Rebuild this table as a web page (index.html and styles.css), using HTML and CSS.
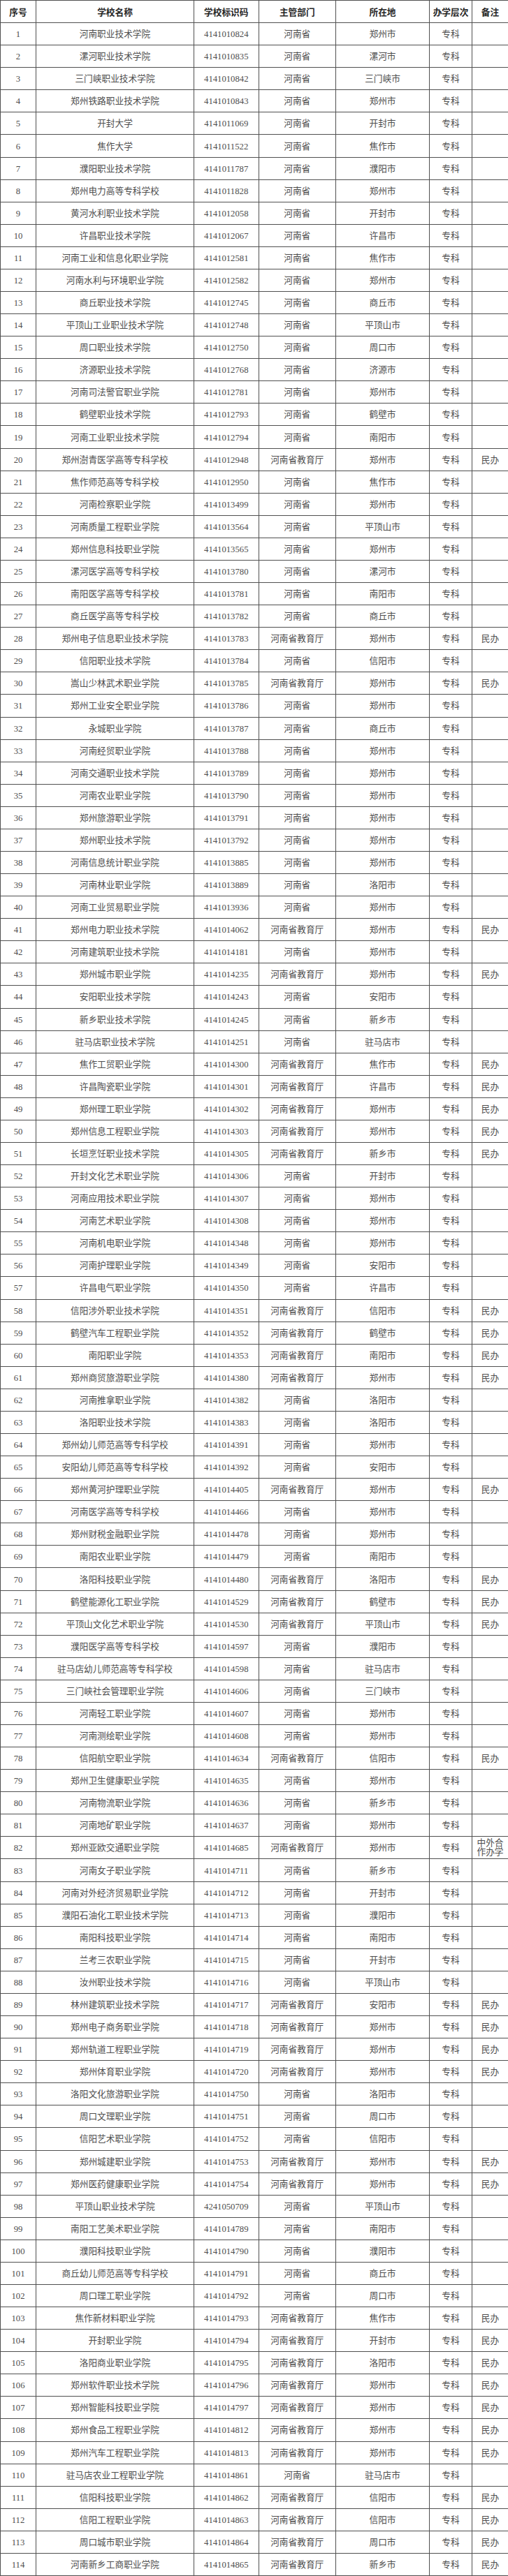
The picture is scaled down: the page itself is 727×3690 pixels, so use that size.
FILE: index.html
```html
<!DOCTYPE html>
<html lang="zh-CN">
<head>
<meta charset="utf-8">
<title>河南省高职院校名单</title>
<link rel="stylesheet" href="styles.css">
</head>
<body>
<table class="list">
<colgroup>
<col class="c-no"><col class="c-name"><col class="c-code"><col class="c-dept"><col class="c-city"><col class="c-level"><col class="c-note">
</colgroup>
<thead>
<tr><th>序号</th><th>学校名称</th><th>学校标识码</th><th>主管部门</th><th>所在地</th><th>办学层次</th><th>备注</th></tr>
</thead>
<tbody>
<tr><td>1</td><td>河南职业技术学院</td><td>4141010824</td><td>河南省</td><td>郑州市</td><td>专科</td><td></td></tr>
<tr><td>2</td><td>漯河职业技术学院</td><td>4141010835</td><td>河南省</td><td>漯河市</td><td>专科</td><td></td></tr>
<tr><td>3</td><td>三门峡职业技术学院</td><td>4141010842</td><td>河南省</td><td>三门峡市</td><td>专科</td><td></td></tr>
<tr><td>4</td><td>郑州铁路职业技术学院</td><td>4141010843</td><td>河南省</td><td>郑州市</td><td>专科</td><td></td></tr>
<tr><td>5</td><td>开封大学</td><td>4141011069</td><td>河南省</td><td>开封市</td><td>专科</td><td></td></tr>
<tr><td>6</td><td>焦作大学</td><td>4141011522</td><td>河南省</td><td>焦作市</td><td>专科</td><td></td></tr>
<tr><td>7</td><td>濮阳职业技术学院</td><td>4141011787</td><td>河南省</td><td>濮阳市</td><td>专科</td><td></td></tr>
<tr><td>8</td><td>郑州电力高等专科学校</td><td>4141011828</td><td>河南省</td><td>郑州市</td><td>专科</td><td></td></tr>
<tr><td>9</td><td>黄河水利职业技术学院</td><td>4141012058</td><td>河南省</td><td>开封市</td><td>专科</td><td></td></tr>
<tr><td>10</td><td>许昌职业技术学院</td><td>4141012067</td><td>河南省</td><td>许昌市</td><td>专科</td><td></td></tr>
<tr><td>11</td><td>河南工业和信息化职业学院</td><td>4141012581</td><td>河南省</td><td>焦作市</td><td>专科</td><td></td></tr>
<tr><td>12</td><td>河南水利与环境职业学院</td><td>4141012582</td><td>河南省</td><td>郑州市</td><td>专科</td><td></td></tr>
<tr><td>13</td><td>商丘职业技术学院</td><td>4141012745</td><td>河南省</td><td>商丘市</td><td>专科</td><td></td></tr>
<tr><td>14</td><td>平顶山工业职业技术学院</td><td>4141012748</td><td>河南省</td><td>平顶山市</td><td>专科</td><td></td></tr>
<tr><td>15</td><td>周口职业技术学院</td><td>4141012750</td><td>河南省</td><td>周口市</td><td>专科</td><td></td></tr>
<tr><td>16</td><td>济源职业技术学院</td><td>4141012768</td><td>河南省</td><td>济源市</td><td>专科</td><td></td></tr>
<tr><td>17</td><td>河南司法警官职业学院</td><td>4141012781</td><td>河南省</td><td>郑州市</td><td>专科</td><td></td></tr>
<tr><td>18</td><td>鹤壁职业技术学院</td><td>4141012793</td><td>河南省</td><td>鹤壁市</td><td>专科</td><td></td></tr>
<tr><td>19</td><td>河南工业职业技术学院</td><td>4141012794</td><td>河南省</td><td>南阳市</td><td>专科</td><td></td></tr>
<tr><td>20</td><td>郑州澍青医学高等专科学校</td><td>4141012948</td><td>河南省教育厅</td><td>郑州市</td><td>专科</td><td>民办</td></tr>
<tr><td>21</td><td>焦作师范高等专科学校</td><td>4141012950</td><td>河南省</td><td>焦作市</td><td>专科</td><td></td></tr>
<tr><td>22</td><td>河南检察职业学院</td><td>4141013499</td><td>河南省</td><td>郑州市</td><td>专科</td><td></td></tr>
<tr><td>23</td><td>河南质量工程职业学院</td><td>4141013564</td><td>河南省</td><td>平顶山市</td><td>专科</td><td></td></tr>
<tr><td>24</td><td>郑州信息科技职业学院</td><td>4141013565</td><td>河南省</td><td>郑州市</td><td>专科</td><td></td></tr>
<tr><td>25</td><td>漯河医学高等专科学校</td><td>4141013780</td><td>河南省</td><td>漯河市</td><td>专科</td><td></td></tr>
<tr><td>26</td><td>南阳医学高等专科学校</td><td>4141013781</td><td>河南省</td><td>南阳市</td><td>专科</td><td></td></tr>
<tr><td>27</td><td>商丘医学高等专科学校</td><td>4141013782</td><td>河南省</td><td>商丘市</td><td>专科</td><td></td></tr>
<tr><td>28</td><td>郑州电子信息职业技术学院</td><td>4141013783</td><td>河南省教育厅</td><td>郑州市</td><td>专科</td><td>民办</td></tr>
<tr><td>29</td><td>信阳职业技术学院</td><td>4141013784</td><td>河南省</td><td>信阳市</td><td>专科</td><td></td></tr>
<tr><td>30</td><td>嵩山少林武术职业学院</td><td>4141013785</td><td>河南省教育厅</td><td>郑州市</td><td>专科</td><td>民办</td></tr>
<tr><td>31</td><td>郑州工业安全职业学院</td><td>4141013786</td><td>河南省</td><td>郑州市</td><td>专科</td><td></td></tr>
<tr><td>32</td><td>永城职业学院</td><td>4141013787</td><td>河南省</td><td>商丘市</td><td>专科</td><td></td></tr>
<tr><td>33</td><td>河南经贸职业学院</td><td>4141013788</td><td>河南省</td><td>郑州市</td><td>专科</td><td></td></tr>
<tr><td>34</td><td>河南交通职业技术学院</td><td>4141013789</td><td>河南省</td><td>郑州市</td><td>专科</td><td></td></tr>
<tr><td>35</td><td>河南农业职业学院</td><td>4141013790</td><td>河南省</td><td>郑州市</td><td>专科</td><td></td></tr>
<tr><td>36</td><td>郑州旅游职业学院</td><td>4141013791</td><td>河南省</td><td>郑州市</td><td>专科</td><td></td></tr>
<tr><td>37</td><td>郑州职业技术学院</td><td>4141013792</td><td>河南省</td><td>郑州市</td><td>专科</td><td></td></tr>
<tr><td>38</td><td>河南信息统计职业学院</td><td>4141013885</td><td>河南省</td><td>郑州市</td><td>专科</td><td></td></tr>
<tr><td>39</td><td>河南林业职业学院</td><td>4141013889</td><td>河南省</td><td>洛阳市</td><td>专科</td><td></td></tr>
<tr><td>40</td><td>河南工业贸易职业学院</td><td>4141013936</td><td>河南省</td><td>郑州市</td><td>专科</td><td></td></tr>
<tr><td>41</td><td>郑州电力职业技术学院</td><td>4141014062</td><td>河南省教育厅</td><td>郑州市</td><td>专科</td><td>民办</td></tr>
<tr><td>42</td><td>河南建筑职业技术学院</td><td>4141014181</td><td>河南省</td><td>郑州市</td><td>专科</td><td></td></tr>
<tr><td>43</td><td>郑州城市职业学院</td><td>4141014235</td><td>河南省教育厅</td><td>郑州市</td><td>专科</td><td>民办</td></tr>
<tr><td>44</td><td>安阳职业技术学院</td><td>4141014243</td><td>河南省</td><td>安阳市</td><td>专科</td><td></td></tr>
<tr><td>45</td><td>新乡职业技术学院</td><td>4141014245</td><td>河南省</td><td>新乡市</td><td>专科</td><td></td></tr>
<tr><td>46</td><td>驻马店职业技术学院</td><td>4141014251</td><td>河南省</td><td>驻马店市</td><td>专科</td><td></td></tr>
<tr><td>47</td><td>焦作工贸职业学院</td><td>4141014300</td><td>河南省教育厅</td><td>焦作市</td><td>专科</td><td>民办</td></tr>
<tr><td>48</td><td>许昌陶瓷职业学院</td><td>4141014301</td><td>河南省教育厅</td><td>许昌市</td><td>专科</td><td>民办</td></tr>
<tr><td>49</td><td>郑州理工职业学院</td><td>4141014302</td><td>河南省教育厅</td><td>郑州市</td><td>专科</td><td>民办</td></tr>
<tr><td>50</td><td>郑州信息工程职业学院</td><td>4141014303</td><td>河南省教育厅</td><td>郑州市</td><td>专科</td><td>民办</td></tr>
<tr><td>51</td><td>长垣烹饪职业技术学院</td><td>4141014305</td><td>河南省教育厅</td><td>新乡市</td><td>专科</td><td>民办</td></tr>
<tr><td>52</td><td>开封文化艺术职业学院</td><td>4141014306</td><td>河南省</td><td>开封市</td><td>专科</td><td></td></tr>
<tr><td>53</td><td>河南应用技术职业学院</td><td>4141014307</td><td>河南省</td><td>郑州市</td><td>专科</td><td></td></tr>
<tr><td>54</td><td>河南艺术职业学院</td><td>4141014308</td><td>河南省</td><td>郑州市</td><td>专科</td><td></td></tr>
<tr><td>55</td><td>河南机电职业学院</td><td>4141014348</td><td>河南省</td><td>郑州市</td><td>专科</td><td></td></tr>
<tr><td>56</td><td>河南护理职业学院</td><td>4141014349</td><td>河南省</td><td>安阳市</td><td>专科</td><td></td></tr>
<tr><td>57</td><td>许昌电气职业学院</td><td>4141014350</td><td>河南省</td><td>许昌市</td><td>专科</td><td></td></tr>
<tr><td>58</td><td>信阳涉外职业技术学院</td><td>4141014351</td><td>河南省教育厅</td><td>信阳市</td><td>专科</td><td>民办</td></tr>
<tr><td>59</td><td>鹤壁汽车工程职业学院</td><td>4141014352</td><td>河南省教育厅</td><td>鹤壁市</td><td>专科</td><td>民办</td></tr>
<tr><td>60</td><td>南阳职业学院</td><td>4141014353</td><td>河南省教育厅</td><td>南阳市</td><td>专科</td><td>民办</td></tr>
<tr><td>61</td><td>郑州商贸旅游职业学院</td><td>4141014380</td><td>河南省教育厅</td><td>郑州市</td><td>专科</td><td>民办</td></tr>
<tr><td>62</td><td>河南推拿职业学院</td><td>4141014382</td><td>河南省</td><td>洛阳市</td><td>专科</td><td></td></tr>
<tr><td>63</td><td>洛阳职业技术学院</td><td>4141014383</td><td>河南省</td><td>洛阳市</td><td>专科</td><td></td></tr>
<tr><td>64</td><td>郑州幼儿师范高等专科学校</td><td>4141014391</td><td>河南省</td><td>郑州市</td><td>专科</td><td></td></tr>
<tr><td>65</td><td>安阳幼儿师范高等专科学校</td><td>4141014392</td><td>河南省</td><td>安阳市</td><td>专科</td><td></td></tr>
<tr><td>66</td><td>郑州黄河护理职业学院</td><td>4141014405</td><td>河南省教育厅</td><td>郑州市</td><td>专科</td><td>民办</td></tr>
<tr><td>67</td><td>河南医学高等专科学校</td><td>4141014466</td><td>河南省</td><td>郑州市</td><td>专科</td><td></td></tr>
<tr><td>68</td><td>郑州财税金融职业学院</td><td>4141014478</td><td>河南省</td><td>郑州市</td><td>专科</td><td></td></tr>
<tr><td>69</td><td>南阳农业职业学院</td><td>4141014479</td><td>河南省</td><td>南阳市</td><td>专科</td><td></td></tr>
<tr><td>70</td><td>洛阳科技职业学院</td><td>4141014480</td><td>河南省教育厅</td><td>洛阳市</td><td>专科</td><td>民办</td></tr>
<tr><td>71</td><td>鹤壁能源化工职业学院</td><td>4141014529</td><td>河南省教育厅</td><td>鹤壁市</td><td>专科</td><td>民办</td></tr>
<tr><td>72</td><td>平顶山文化艺术职业学院</td><td>4141014530</td><td>河南省教育厅</td><td>平顶山市</td><td>专科</td><td>民办</td></tr>
<tr><td>73</td><td>濮阳医学高等专科学校</td><td>4141014597</td><td>河南省</td><td>濮阳市</td><td>专科</td><td></td></tr>
<tr><td>74</td><td>驻马店幼儿师范高等专科学校</td><td>4141014598</td><td>河南省</td><td>驻马店市</td><td>专科</td><td></td></tr>
<tr><td>75</td><td>三门峡社会管理职业学院</td><td>4141014606</td><td>河南省</td><td>三门峡市</td><td>专科</td><td></td></tr>
<tr><td>76</td><td>河南轻工职业学院</td><td>4141014607</td><td>河南省</td><td>郑州市</td><td>专科</td><td></td></tr>
<tr><td>77</td><td>河南测绘职业学院</td><td>4141014608</td><td>河南省</td><td>郑州市</td><td>专科</td><td></td></tr>
<tr><td>78</td><td>信阳航空职业学院</td><td>4141014634</td><td>河南省教育厅</td><td>信阳市</td><td>专科</td><td>民办</td></tr>
<tr><td>79</td><td>郑州卫生健康职业学院</td><td>4141014635</td><td>河南省</td><td>郑州市</td><td>专科</td><td></td></tr>
<tr><td>80</td><td>河南物流职业学院</td><td>4141014636</td><td>河南省</td><td>新乡市</td><td>专科</td><td></td></tr>
<tr><td>81</td><td>河南地矿职业学院</td><td>4141014637</td><td>河南省</td><td>郑州市</td><td>专科</td><td></td></tr>
<tr><td>82</td><td>郑州亚欧交通职业学院</td><td>4141014685</td><td>河南省教育厅</td><td>郑州市</td><td>专科</td><td class="wrap">中外合作办学</td></tr>
<tr><td>83</td><td>河南女子职业学院</td><td>4141014711</td><td>河南省</td><td>新乡市</td><td>专科</td><td></td></tr>
<tr><td>84</td><td>河南对外经济贸易职业学院</td><td>4141014712</td><td>河南省</td><td>开封市</td><td>专科</td><td></td></tr>
<tr><td>85</td><td>濮阳石油化工职业技术学院</td><td>4141014713</td><td>河南省</td><td>濮阳市</td><td>专科</td><td></td></tr>
<tr><td>86</td><td>南阳科技职业学院</td><td>4141014714</td><td>河南省</td><td>南阳市</td><td>专科</td><td></td></tr>
<tr><td>87</td><td>兰考三农职业学院</td><td>4141014715</td><td>河南省</td><td>开封市</td><td>专科</td><td></td></tr>
<tr><td>88</td><td>汝州职业技术学院</td><td>4141014716</td><td>河南省</td><td>平顶山市</td><td>专科</td><td></td></tr>
<tr><td>89</td><td>林州建筑职业技术学院</td><td>4141014717</td><td>河南省教育厅</td><td>安阳市</td><td>专科</td><td>民办</td></tr>
<tr><td>90</td><td>郑州电子商务职业学院</td><td>4141014718</td><td>河南省教育厅</td><td>郑州市</td><td>专科</td><td>民办</td></tr>
<tr><td>91</td><td>郑州轨道工程职业学院</td><td>4141014719</td><td>河南省教育厅</td><td>郑州市</td><td>专科</td><td>民办</td></tr>
<tr><td>92</td><td>郑州体育职业学院</td><td>4141014720</td><td>河南省教育厅</td><td>郑州市</td><td>专科</td><td>民办</td></tr>
<tr><td>93</td><td>洛阳文化旅游职业学院</td><td>4141014750</td><td>河南省</td><td>洛阳市</td><td>专科</td><td></td></tr>
<tr><td>94</td><td>周口文理职业学院</td><td>4141014751</td><td>河南省</td><td>周口市</td><td>专科</td><td></td></tr>
<tr><td>95</td><td>信阳艺术职业学院</td><td>4141014752</td><td>河南省</td><td>信阳市</td><td>专科</td><td></td></tr>
<tr><td>96</td><td>郑州城建职业学院</td><td>4141014753</td><td>河南省教育厅</td><td>郑州市</td><td>专科</td><td>民办</td></tr>
<tr><td>97</td><td>郑州医药健康职业学院</td><td>4141014754</td><td>河南省教育厅</td><td>郑州市</td><td>专科</td><td>民办</td></tr>
<tr><td>98</td><td>平顶山职业技术学院</td><td>4241050709</td><td>河南省</td><td>平顶山市</td><td>专科</td><td></td></tr>
<tr><td>99</td><td>南阳工艺美术职业学院</td><td>4141014789</td><td>河南省</td><td>南阳市</td><td>专科</td><td></td></tr>
<tr><td>100</td><td>濮阳科技职业学院</td><td>4141014790</td><td>河南省</td><td>濮阳市</td><td>专科</td><td></td></tr>
<tr><td>101</td><td>商丘幼儿师范高等专科学校</td><td>4141014791</td><td>河南省</td><td>商丘市</td><td>专科</td><td></td></tr>
<tr><td>102</td><td>周口理工职业学院</td><td>4141014792</td><td>河南省</td><td>周口市</td><td>专科</td><td></td></tr>
<tr><td>103</td><td>焦作新材料职业学院</td><td>4141014793</td><td>河南省教育厅</td><td>焦作市</td><td>专科</td><td>民办</td></tr>
<tr><td>104</td><td>开封职业学院</td><td>4141014794</td><td>河南省教育厅</td><td>开封市</td><td>专科</td><td>民办</td></tr>
<tr><td>105</td><td>洛阳商业职业学院</td><td>4141014795</td><td>河南省教育厅</td><td>洛阳市</td><td>专科</td><td>民办</td></tr>
<tr><td>106</td><td>郑州软件职业技术学院</td><td>4141014796</td><td>河南省教育厅</td><td>郑州市</td><td>专科</td><td>民办</td></tr>
<tr><td>107</td><td>郑州智能科技职业学院</td><td>4141014797</td><td>河南省教育厅</td><td>郑州市</td><td>专科</td><td>民办</td></tr>
<tr><td>108</td><td>郑州食品工程职业学院</td><td>4141014812</td><td>河南省教育厅</td><td>郑州市</td><td>专科</td><td>民办</td></tr>
<tr><td>109</td><td>郑州汽车工程职业学院</td><td>4141014813</td><td>河南省教育厅</td><td>郑州市</td><td>专科</td><td>民办</td></tr>
<tr><td>110</td><td>驻马店农业工程职业学院</td><td>4141014861</td><td>河南省</td><td>驻马店市</td><td>专科</td><td></td></tr>
<tr><td>111</td><td>信阳科技职业学院</td><td>4141014862</td><td>河南省教育厅</td><td>信阳市</td><td>专科</td><td>民办</td></tr>
<tr><td>112</td><td>信阳工程职业学院</td><td>4141014863</td><td>河南省教育厅</td><td>信阳市</td><td>专科</td><td>民办</td></tr>
<tr><td>113</td><td>周口城市职业学院</td><td>4141014864</td><td>河南省教育厅</td><td>周口市</td><td>专科</td><td>民办</td></tr>
<tr><td>114</td><td>河南新乡工商职业学院</td><td>4141014865</td><td>河南省教育厅</td><td>新乡市</td><td>专科</td><td>民办</td></tr>
</tbody>
</table>
</body>
</html>
```
FILE: styles.css
```css
html, body {
  margin: 0;
  padding: 0;
  background: #ffffff;
}

.list {
  width: 727px;
  border-collapse: collapse;
  table-layout: fixed;
}

.c-no { width: 51px; }
.c-name { width: 226px; }
.c-code { width: 92.5px; }
.c-dept { width: 110.5px; }
.c-city { width: 134px; }
.c-level { width: 61px; }
.c-note { width: 52px; }

.list tr {
  height: 32.08px;
}

.list th,
.list td {
  border: 1px solid #505050;
  text-align: center;
  vertical-align: middle;
  padding: 1px 4px 0;
  line-height: 14px;
  white-space: nowrap;
}

.list th {
  font-family: "Noto Sans CJK SC", sans-serif;
  font-weight: 700;
  font-size: 12.7px;
  color: #262626;
}

.list td {
  font-family: "Liberation Serif", "Noto Sans CJK SC", serif;
  font-weight: 400;
  font-size: 12.7px;
  color: #4e4e4e;
}

.list td.wrap {
  white-space: normal;
  line-height: 13.5px;
  padding: 1px 6px 0;
}
```
